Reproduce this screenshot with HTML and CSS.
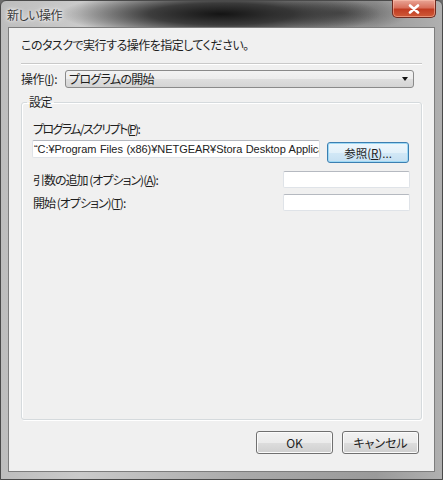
FILE: index.html
```html
<!DOCTYPE html>
<html lang="ja">
<head>
<meta charset="utf-8">
<title>新しい操作</title>
<link rel="stylesheet" href="styles.css">
</head>
<body>
<div class="window">
  <div class="titlebar">
    <span class="title">新しい操作</span>
    <span class="close"><svg width="12" height="10" viewBox="0 0 12 10"><path d="M2 1.5 L10 8.5 M10 1.5 L2 8.5" stroke="#fff" stroke-width="2.6" stroke-linecap="round"/></svg></span>
  </div>
  <div class="client">
    <div class="instruction">このタスクで実行する操作を指定してください。</div>
    <div class="separator"></div>
    <div class="action-row">
      <span class="action-label">操作(<u>I</u>):</span>
      <div class="combo">
        <span class="combo-text">プログラムの開始</span>
        <span class="combo-arrow"></span>
      </div>
    </div>
    <fieldset class="group">
      <legend class="group-legend">設定</legend>
      <div class="field-label">プログラム/スクリプト(<u>P</u>):</div>
      <div class="program-row">
        <div class="textbox path">“C:¥Program Files (x86)¥NETGEAR¥Stora Desktop Application¥Stora.exe”</div>
        <button class="btn browse"><span class="browse-text">参照(<u>R</u>)...</span></button>
      </div>
      <div class="option-row first">
        <span class="option-label">引数の追加 (オプション)(<u>A</u>):</span>
        <div class="textbox small"></div>
      </div>
      <div class="option-row">
        <span class="option-label">開始 (オプション)(<u>T</u>):</span>
        <div class="textbox small"></div>
      </div>
    </fieldset>
    <div class="footer">
      <button class="btn ok">OK</button>
      <button class="btn cancel">キャンセル</button>
    </div>
  </div>
</div>
</body>
</html>
```

FILE: styles.css
```css
* { box-sizing: border-box; }
html, body { margin: 0; padding: 0; }
body {
  width: 443px;
  height: 480px;
  background: #6c6c6c;
  font-family: "Noto Sans CJK JP", "Noto Sans", sans-serif;
  font-size: 12px;
  color: #1e1e1e;
  font-feature-settings: "palt";
  letter-spacing: -0.5px;
}
.window {
  width: 443px;
  height: 480px;
  display: flex;
  flex-direction: column;
  padding: 0 7px 7px 7px;
  border: 1px solid #4a4a4a;
  border-radius: 6px 6px 0 0;
  background:
    radial-gradient(ellipse 160px 24px at 220px 13px, rgba(20,20,20,1) 0%, rgba(30,30,30,0.8) 45%, rgba(40,40,40,0) 100%),
    radial-gradient(ellipse 70px 18px at 340px 12px, rgba(60,60,60,0.7), rgba(60,60,60,0) 100%),
    linear-gradient(90deg, #bdbdbd 0%, #cacaca 18%, #a9a9a9 55%, #9a9a9a 85%, #b0b0b0 100%);
  background-color: #acacac;
}
.titlebar {
  height: 26px;
  display: flex;
  justify-content: space-between;
  align-items: flex-start;
  margin: 0 -1px 0 -1px;
}
.title {
  padding: 6px 0 0 0;
  font-size: 12px;
  line-height: 16px;
  color: #3a3a3a;
  text-shadow: 0 0 6px #fff, 0 0 3px #fff;
}
.close {
  width: 44px;
  height: 18px;
  margin-top: -1px;
  margin-right: 0;
  display: flex;
  align-items: center;
  justify-content: center;
  border: 1px solid #6e2a20;
  border-top: none;
  border-radius: 0 0 5px 5px;
  background: linear-gradient(#e9a596 0%, #d8705c 45%, #c13c22 55%, #cf5a38 100%);
  box-shadow: inset 0 0 0 1px rgba(255,200,180,0.5);
}
.client {
  flex: 1;
  display: flex;
  flex-direction: column;
  border: 1px solid #7d7d7d;
  background: #f0f0f0;
  padding: 9px 12px 17px 12px;
}
.instruction {
  line-height: 16px;
  height: 16px;
}
.separator {
  margin-top: 10px;
  border-top: 1px solid #c9c9c9;
  border-bottom: 1px solid #ffffff;
  height: 2px;
}
.action-row {
  margin-top: 5px;
  display: flex;
  align-items: center;
  height: 18px;
}
.action-label {
  width: 44px;
  line-height: 16px;
}
.combo {
  width: 349px;
  height: 18px;
  display: flex;
  align-items: center;
  justify-content: space-between;
  border: 1px solid #8a8a8a;
  border-radius: 3px;
  background: linear-gradient(#f3f3f3 0%, #ececec 50%, #dedede 52%, #d4d4d4 100%);
  padding: 0 5px 0 3px;
}
.combo-text {
  line-height: 16px;
  letter-spacing: -0.7px;
}
.combo-arrow {
  width: 0;
  height: 0;
  border-left: 3.5px solid transparent;
  border-right: 3.5px solid transparent;
  border-top: 4px solid #111;
}
.group {
  flex: 1;
  margin: 6px 0 0 0;
  padding: 11px 12px 0 10px;
  border: 1px solid #d5dadd;
  border-radius: 3px;
  box-shadow: inset 1px 1px 0 #fff, 1px 1px 0 #fff;
  min-width: 0;
}
.group-legend {
  margin-left: -5px;
  padding: 0 2px;
  line-height: 16px;
  font-size: 12px;
}
.field-label {
  line-height: 16px;
  padding-left: 1px;
  letter-spacing: -1.6px;
}
.program-row {
  margin-top: 3px;
  display: flex;
  align-items: flex-start;
  gap: 7px;
}
.textbox {
  background: #fff;
  border: 1px solid #dfe3e8;
  border-top-color: #b5b9c0;
  border-radius: 2px;
}
.path {
  flex: 1;
  height: 18px;
  overflow: hidden;
  white-space: nowrap;
  line-height: 16px;
  padding: 0 0 0 1px;
  font-family: "Liberation Sans", "Noto Sans CJK JP", sans-serif;
  font-size: 11px;
  letter-spacing: -0.05px;
  word-spacing: 0.5px;
  color: #222;
}
.btn {
  font-family: inherit;
  font-size: 12px;
  color: #1e1e1e;
  font-feature-settings: "palt";
  letter-spacing: 0;
  height: 23px;
  padding: 0;
  border: 1px solid #707070;
  border-radius: 3px;
  background: linear-gradient(#f2f2f2 0%, #ebebeb 50%, #dddddd 52%, #cfcfcf 100%);
  box-shadow: inset 0 0 0 1px #fbfbfb;
  line-height: 20px;
}
.browse {
  width: 82px;
  height: 21px;
  margin-top: 2px;
  border-color: #3c7fb1;
  box-shadow: inset 0 0 0 1px #9fd9f5;
  background: linear-gradient(#eef7fc 0%, #e3f1fa 50%, #d2e8f6 52%, #c6e0f2 100%);
  line-height: 18px;
  font-feature-settings: normal;
}
.browse-text {
  display: inline-block;
  line-height: 16px;
  font-size: 11.5px;
}
.option-row {
  display: flex;
  justify-content: space-between;
  align-items: center;
  margin-top: 6px;
}
.option-row.first {
  margin-top: 8px;
}
.option-label {
  line-height: 16px;
  padding-left: 1px;
  letter-spacing: -1px;
}
.small {
  width: 127px;
  height: 17px;
  margin-right: -1px;
}
.footer {
  margin-top: 11px;
  display: flex;
  justify-content: flex-end;
  gap: 9px;
  padding-right: 3px;
}
.ok, .cancel {
  width: 77px;
}
```
